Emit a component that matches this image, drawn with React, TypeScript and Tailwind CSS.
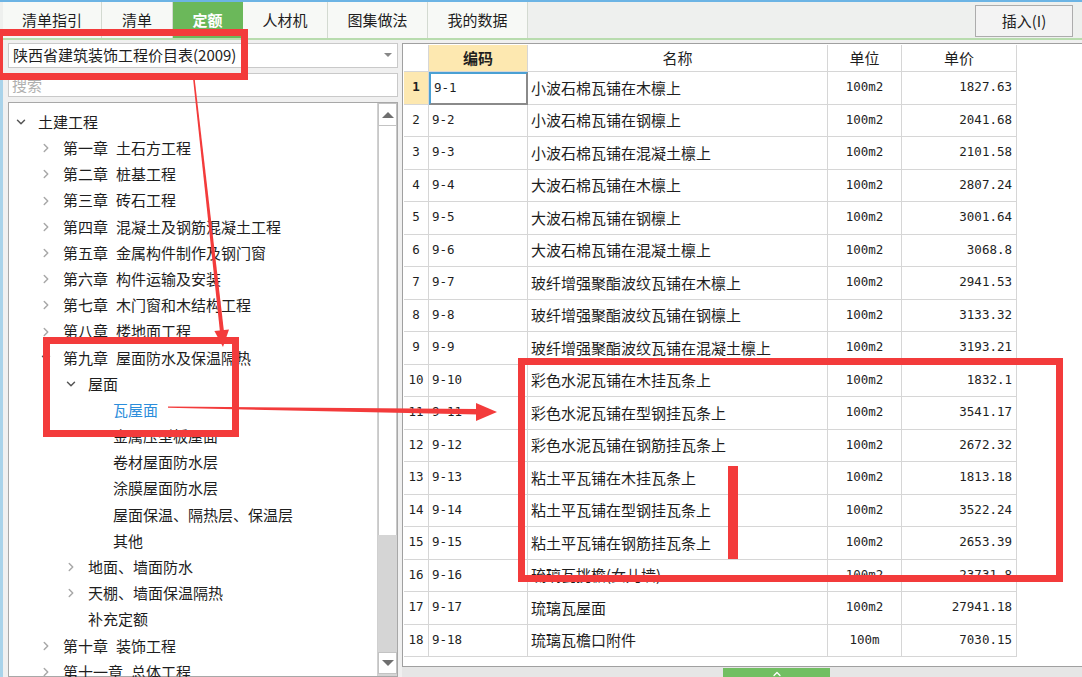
import { ChevronDown, ChevronRight, ChevronUp } from "lucide-react";

// ---------------------------------------------------------------------------
// Data
// ---------------------------------------------------------------------------

const CJK = "font-['Noto_Sans_CJK_SC',sans-serif]";
const MONO = "font-['DejaVu_Sans_Mono',monospace]";

const tabs = [
  { label: "清单指引", w: "w-[99px]" },
  { label: "清单", w: "w-[71px]" },
  { label: "定额", w: "w-[70px]", active: true },
  { label: "人材机", w: "w-[85px]" },
  { label: "图集做法", w: "w-[100px]" },
  { label: "我的数据", w: "w-[100px]" },
];

type TreeRow = {
  level: 1 | 2 | 3 | 4;
  label: string;
  chevron?: "down" | "right";
  active?: boolean;
};

const tree: TreeRow[] = [
  { level: 1, label: "土建工程", chevron: "down" },
  { level: 2, label: "第一章 土石方工程", chevron: "right" },
  { level: 2, label: "第二章 桩基工程", chevron: "right" },
  { level: 2, label: "第三章 砖石工程", chevron: "right" },
  { level: 2, label: "第四章 混凝土及钢筋混凝土工程", chevron: "right" },
  { level: 2, label: "第五章 金属构件制作及钢门窗", chevron: "right" },
  { level: 2, label: "第六章 构件运输及安装", chevron: "right" },
  { level: 2, label: "第七章 木门窗和木结构工程", chevron: "right" },
  { level: 2, label: "第八章 楼地面工程", chevron: "right" },
  { level: 2, label: "第九章 屋面防水及保温隔热", chevron: "down" },
  { level: 3, label: "屋面", chevron: "down" },
  { level: 4, label: "瓦屋面", active: true },
  { level: 4, label: "金属压型板屋面" },
  { level: 4, label: "卷材屋面防水层" },
  { level: 4, label: "涂膜屋面防水层" },
  { level: 4, label: "屋面保温、隔热层、保温层" },
  { level: 4, label: "其他" },
  { level: 3, label: "地面、墙面防水", chevron: "right" },
  { level: 3, label: "天棚、墙面保温隔热", chevron: "right" },
  { level: 3, label: "补充定额" },
  { level: 2, label: "第十章 装饰工程", chevron: "right" },
  { level: 2, label: "第十一章 总体工程", chevron: "right" },
];

const indent: Record<number, string> = {
  1: "pl-[5px]",
  2: "pl-[30px]",
  3: "pl-[55px]",
  4: "pl-[80px]",
};

const rows: [string, string, string, string][] = [
  ["9-1", "小波石棉瓦铺在木檩上", "100m2", "1827.63"],
  ["9-2", "小波石棉瓦铺在钢檩上", "100m2", "2041.68"],
  ["9-3", "小波石棉瓦铺在混凝土檩上", "100m2", "2101.58"],
  ["9-4", "大波石棉瓦铺在木檩上", "100m2", "2807.24"],
  ["9-5", "大波石棉瓦铺在钢檩上", "100m2", "3001.64"],
  ["9-6", "大波石棉瓦铺在混凝土檩上", "100m2", "3068.8"],
  ["9-7", "玻纤增强聚酯波纹瓦铺在木檩上", "100m2", "2941.53"],
  ["9-8", "玻纤增强聚酯波纹瓦铺在钢檩上", "100m2", "3133.32"],
  ["9-9", "玻纤增强聚酯波纹瓦铺在混凝土檩上", "100m2", "3193.21"],
  ["9-10", "彩色水泥瓦铺在木挂瓦条上", "100m2", "1832.1"],
  ["9-11", "彩色水泥瓦铺在型钢挂瓦条上", "100m2", "3541.17"],
  ["9-12", "彩色水泥瓦铺在钢筋挂瓦条上", "100m2", "2672.32"],
  ["9-13", "粘土平瓦铺在木挂瓦条上", "100m2", "1813.18"],
  ["9-14", "粘土平瓦铺在型钢挂瓦条上", "100m2", "3522.24"],
  ["9-15", "粘土平瓦铺在钢筋挂瓦条上", "100m2", "2653.39"],
  ["9-16", "琉璃瓦挑檐(女儿墙)", "100m2", "23731.8"],
  ["9-17", "琉璃瓦屋面", "100m2", "27941.18"],
  ["9-18", "琉璃瓦檐口附件", "100m", "7030.15"],
];

// ---------------------------------------------------------------------------
// Pieces
// ---------------------------------------------------------------------------

function TreeLabel({ label }: { label: string }): JSX.Element {
  const [head, tail] = label.split(" ");
  return (
    <span className="whitespace-nowrap">
      {head}
      {tail && <span className="ml-[8px]">{tail}</span>}
    </span>
  );
}

function TriUp(): JSX.Element {
  return <div className="h-0 w-0 border-x-[6px] border-b-[6px] border-x-transparent border-b-[#6f6f6f]" />;
}

function TriDown(): JSX.Element {
  return <div className="h-0 w-0 border-x-[6px] border-t-[6px] border-x-transparent border-t-[#6f6f6f]" />;
}

function Overlay(): JSX.Element {
  return (
    <div className="pointer-events-none absolute inset-0">
      <div className="absolute left-[-4px] top-[29px] h-[51px] w-[252px] border-[7px] border-[#f33b3b]" />
      <div className="absolute left-[43px] top-[337px] h-[100px] w-[196px] border-[7px] border-[#f33b3b]" />
      <div className="absolute left-[518px] top-[358px] h-[224px] w-[545px] border-[7px] border-[#f33b3b]" />
      <div className="absolute left-[728px] top-[466px] h-[93px] w-[10px] bg-[#f33b3b]" />
      <svg className="absolute left-0 top-0" width="1082" height="677">
        <polygon points="194.8,80 193.2,80 220,332.2 224,331.8" fill="#f33b3b" />
        <polygon points="214.4,331 229,329.5 223,347" fill="#f33b3b" />
        <polygon points="168,406.5 478,409 478,414.5 168,407.8" fill="#f33b3b" />
        <polygon points="476,403 497,412 476,421" fill="#f33b3b" />
      </svg>
    </div>
  );
}

// ---------------------------------------------------------------------------
// Component
// ---------------------------------------------------------------------------

export default function App(): JSX.Element {
  return (
    <div className={`relative h-[677px] w-[1082px] overflow-hidden bg-[#f0f0f0] text-[#1e1e1e] ${CJK}`}>
      {/* Tab bar */}
      <div className="h-[2px] bg-[#6cb4e4]" />
      <div className="flex h-[38px] border-b-2 border-[#b8dcae] bg-[#eef0ee] pl-[3px]">
        {tabs.map((t) => (
          <div
            key={t.label}
            className={`flex ${t.w} items-center justify-center border-r text-[15px] ${
              t.active
                ? "border-[#6bb85a] bg-[#6bb85a] font-bold text-white"
                : "border-[#d3dad1] bg-[#f7f9f6]"
            }`}
          >
            {t.label}
          </div>
        ))}
        <button
          type="button"
          className="ml-auto mr-[9px] mt-[3px] flex h-[32px] w-[98px] items-center justify-center border border-[#acacac] bg-[#f3f3f3] text-[15px]"
        >
          插入(I)
        </button>
      </div>

      <div className="flex h-[637px] pt-[3px]">
        <div className="w-[8px] border-l-[3px] border-[#a9d3ea]" />

        {/* Left panel */}
        <div className="flex w-[390px] flex-col gap-[5px]">
          <div className="flex h-[27px] items-center justify-between border border-[#c9c9c9] bg-white pl-[4px] pr-[5px] text-[15px]">
            <span>陕西省建筑装饰工程价目表(2009)</span>
            <div className="h-0 w-0 border-x-[4px] border-t-[4px] border-x-transparent border-t-[#888]" />
          </div>
          <div className="flex h-[27px] items-center border border-[#c9c9c9] bg-white pl-[3px] text-[15px] text-[#b0b0b0]">
            搜索
          </div>
          <div className="flex h-[575px] border border-[#a8a8a8] bg-white">
            <div className="flex-1 pt-[6px]">
              {tree.map((r) => (
                <div key={r.label} className={`flex h-[26.2px] items-center text-[15px] ${indent[r.level]}`}>
                  <div className="flex w-[14px] justify-center">
                    {r.chevron === "down" && <ChevronDown size={14} strokeWidth={2.5} color="#555" />}
                    {r.chevron === "right" && <ChevronRight size={14} strokeWidth={2.5} color="#a8a8a8" />}
                  </div>
                  <div className={`ml-[10px] ${r.active ? "text-[#2b8ddb]" : ""}`}>
                    <TreeLabel label={r.label} />
                  </div>
                </div>
              ))}
            </div>
            <div className="flex w-[20px] flex-col border-l border-[#d0d0d0] bg-[#d5d5d5]">
              <div className="flex h-[23px] items-center justify-center border border-[#c3c3c3] bg-white">
                <TriUp />
              </div>
              <div className="h-[409px] border-x border-[#c8c8c8] bg-white" />
              <div className="h-[117px]" />
              <div className="flex h-[22px] items-center justify-center border border-[#c3c3c3] bg-white">
                <TriDown />
              </div>
            </div>
          </div>
        </div>

        {/* Right panel */}
        <div className="ml-[4px] flex flex-1 flex-col">
          <div className="h-[627px] border-y border-l border-[#a0a0a0] bg-white pl-[1px] pt-[1px]">
            <div className="flex h-[27px] text-[15px]">
              <div className="w-[25px] border-b border-r border-[#d6d6d6]" />
              <div className="flex w-[99px] items-center justify-center border-b border-r border-[#d6d6d6] bg-[#fde8b0] font-bold">
                编码
              </div>
              <div className="flex w-[300px] items-center justify-center border-b border-r border-[#d6d6d6]">名称</div>
              <div className="flex w-[74px] items-center justify-center border-b border-r border-[#d6d6d6]">单位</div>
              <div className="flex w-[115px] items-center justify-center border-b border-r border-[#d6d6d6]">单价</div>
            </div>
            {rows.map(([code, name, unit, price], i) => (
              <div key={code} className="flex h-[32.5px]">
                <div
                  className={`flex w-[25px] items-center justify-center border-b border-r border-[#d6d6d6] text-[12.5px] ${MONO} ${
                    i === 0 ? "bg-[#fde8b0] font-bold" : ""
                  }`}
                >
                  {i + 1}
                </div>
                <div
                  className={`flex w-[99px] items-center pl-[3px] text-[12.5px] ${MONO} ${
                    i === 0
                      ? "border-2 border-b-[#8a8a8a] border-l-[#4aa0d4] border-r-[#8a8a8a] border-t-[#4aa0d4] pl-[2px]"
                      : "border-b border-r border-[#d6d6d6]"
                  }`}
                >
                  {code}
                </div>
                <div className="flex w-[300px] items-center border-b border-r border-[#d6d6d6] pl-[3px] text-[15px]">
                  <span className="whitespace-nowrap">{name}</span>
                </div>
                <div className={`flex w-[74px] items-center justify-center border-b border-r border-[#d6d6d6] text-[12.5px] ${MONO}`}>
                  {unit}
                </div>
                <div className={`flex w-[115px] items-center justify-end border-b border-r border-[#d6d6d6] pr-[4px] text-[12.5px] ${MONO}`}>
                  {price}
                </div>
              </div>
            ))}
          </div>
          <div className="flex h-[10px] bg-[#e6e6e6]">
            <div className="ml-[321px] mt-[1px] flex h-[20px] w-[107px] justify-center bg-[#72bf62]">
              <ChevronUp size={12} color="#ffffff" strokeWidth={2.5} />
            </div>
          </div>
        </div>
      </div>

      <Overlay />
    </div>
  );
}
